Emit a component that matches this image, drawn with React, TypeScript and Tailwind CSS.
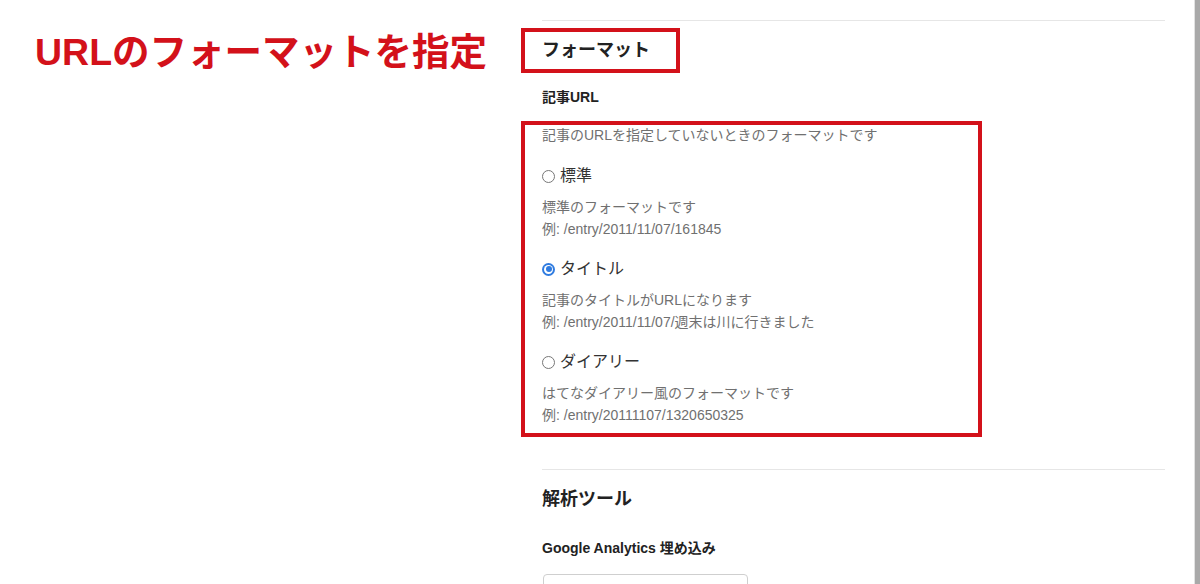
import React from "react";

const font = { fontFamily: '"Liberation Sans", "Noto Sans CJK JP", sans-serif' };

function Radio({ checked, label }: { checked?: boolean; label: string }) {
  return (
    <div className="flex items-center h-[24px]">
      {checked ? (
        <span className="w-[13px] h-[13px] rounded-full bg-[#2f7be0] flex items-center justify-center shrink-0">
          <span className="w-[9px] h-[9px] rounded-full bg-white flex items-center justify-center">
            <span className="w-[6px] h-[6px] rounded-full bg-[#2f7be0]" />
          </span>
        </span>
      ) : (
        <span className="w-[13px] h-[13px] rounded-full border border-[#777] bg-white shrink-0" />
      )}
      <span className="ml-[5px] text-[16px] leading-[24px] text-[#333]">{label}</span>
    </div>
  );
}

function Desc({ lines }: { lines: string[] }) {
  return (
    <div className="mt-[8px] text-[14px] leading-[22px] text-[#707070]">
      {lines.map((l) => (
        <div key={l}>{l}</div>
      ))}
    </div>
  );
}

export default function App() {
  return (
    <div className="w-[1200px] h-[584px] overflow-hidden bg-white flex" style={font}>
      <div className="w-[521px] shrink-0 pt-[29px] pl-[35px]">
        <div className="text-[37.5px] leading-[46px] font-bold text-[#d3111a] whitespace-nowrap">
          URLのフォーマットを指定
        </div>
      </div>
      <div className="flex-1 min-w-0">
        <div className="h-[20px]" />
        <div className="ml-[21px] w-[623px] h-px bg-[#e6e6e6]" />
        <div className="mt-[7px] w-[159px] h-[45px] border-4 border-[#d3111a] flex items-center pl-[17px]">
          <span className="text-[18px] font-bold text-[#222]">フォーマット</span>
        </div>
        <div className="mt-[14px] pl-[21px] text-[14px] leading-[20px] font-bold text-[#222]">記事URL</div>
        <div className="mt-[14px] w-[461px] h-[316px] border-4 border-[#d3111a] pl-[17px]">
          <div className="text-[14px] leading-[20px] text-[#707070]">
            記事のURLを指定していないときのフォーマットです
          </div>
          <div className="mt-[19px]">
            <Radio label="標準" />
          </div>
          <Desc lines={["標準のフォーマットです", "例: /entry/2011/11/07/161845"]} />
          <div className="mt-[17px]">
            <Radio checked label="タイトル" />
          </div>
          <Desc lines={["記事のタイトルがURLになります", "例: /entry/2011/11/07/週末は川に行きました"]} />
          <div className="mt-[17px]">
            <Radio label="ダイアリー" />
          </div>
          <Desc lines={["はてなダイアリー風のフォーマットです", "例: /entry/20111107/1320650325"]} />
        </div>
        <div className="mt-[32px] ml-[21px] w-[623px] h-px bg-[#e6e6e6]" />
        <div className="mt-[16px] pl-[21px] text-[18px] leading-[26px] font-bold text-[#222]">解析ツール</div>
        <div className="mt-[26px] pl-[21px] text-[14px] leading-[20px] font-bold text-[#222]">
          Google Analytics 埋め込み
        </div>
        <div className="mt-[16px] ml-[22px] w-[205px] h-[40px] border border-[#cfcfcf] rounded-[4px] bg-white" />
      </div>
      <div className="w-[6px] shrink-0 border-l border-[#e2e2e2] bg-[#a9a9a9]" />
    </div>
  );
}
